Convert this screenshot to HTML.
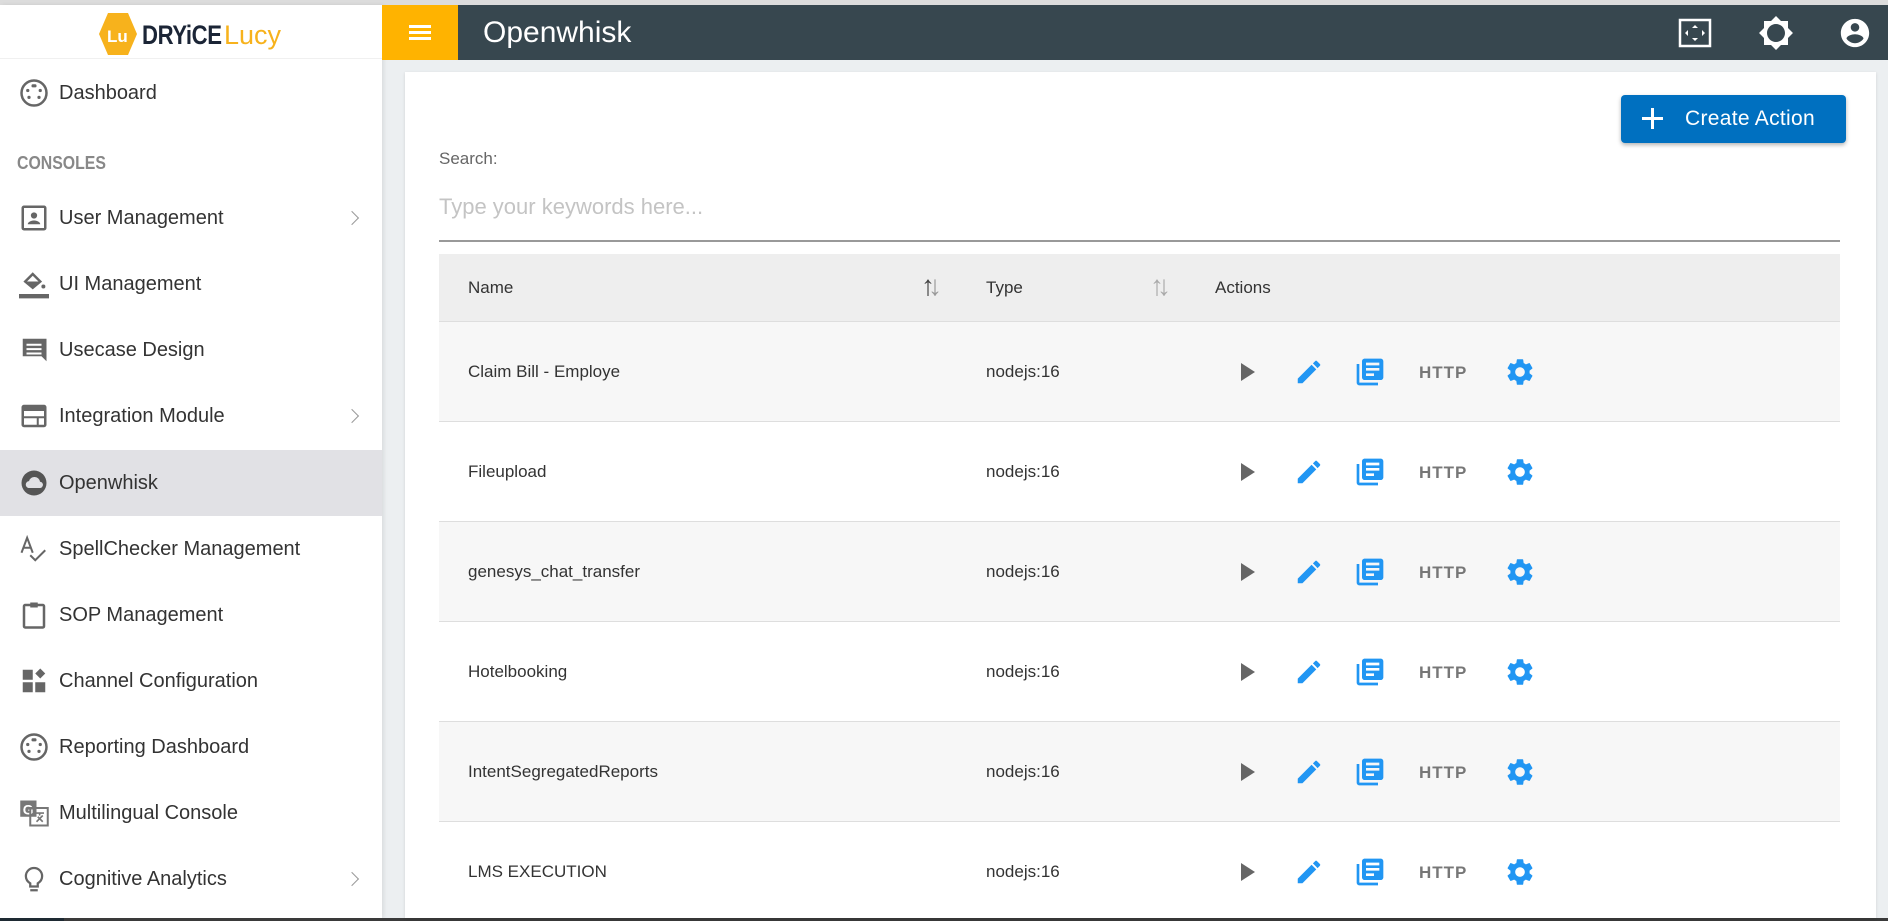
<!DOCTYPE html>
<html><head><meta charset="utf-8"><style>
*{box-sizing:border-box;margin:0;padding:0}
body{width:1888px;height:921px;overflow:hidden;background:#eceff1;font-family:"Liberation Sans",Roboto,sans-serif;position:relative}
.abs{position:absolute}
#top{left:0;top:0;width:1888px;height:5px;background:#dcdcdc}
#side{left:0;top:5px;width:382px;height:913px;background:#fff;box-shadow:2px 0 4px rgba(0,0,0,.08)}
#logo{left:0;top:5px;width:382px;height:54px;background:#fff;border-bottom:1px solid #f0f0f0}
#hdr{left:382px;top:5px;width:1506px;height:55px;background:#37474f}
#ham{left:382px;top:5px;width:76px;height:55px;background:#ffb300}
.item{position:absolute;left:0;width:382px;height:66px;font-size:20px;color:#333;display:flex;align-items:center}
.item .ic{position:absolute;left:19px;top:50%;margin-top:-15px;width:30px;height:30px}
.item span{position:absolute;left:59px}
.item .chev{position:absolute;left:347px;width:10px;height:10px;border-right:1.5px solid #999;border-top:1.5px solid #999;transform:rotate(45deg)}
#card{left:405px;top:72px;width:1471px;height:846px;background:#fff;box-shadow:0 1px 3px rgba(0,0,0,.12)}
.row{position:absolute;left:439px;width:1401px;height:100px;border-bottom:1.5px solid #dedede;font-size:17px;color:#333}
.row .n{position:absolute;left:29px;top:40px}
.row .t{position:absolute;left:547px;top:40px}
.row svg{position:absolute}
.http{position:absolute;left:980px;top:41px;font-weight:bold;font-size:17px;color:#777;letter-spacing:1px}
</style></head><body>
<div class="abs" id="top"></div>
<div class="abs" id="side"></div>
<div class="abs" id="logo">
 <svg class="abs" style="left:98px;top:7px" width="40" height="44" viewBox="0 0 40 44"><polygon points="10,1 30,1 39,22 30,43 10,43 1,22" fill="#f7b21c"/><text x="9" y="30" font-family="Liberation Sans" font-weight="bold" font-size="17" fill="#fff">Lu</text></svg>
 <div class="abs" style="left:142px;top:15px;font-size:27px;font-weight:bold;color:#1b2536;letter-spacing:-0.5px;transform:scaleX(.82);transform-origin:left">DRYiCE</div>
 <div class="abs" style="left:224px;top:15px;font-size:27px;color:#f7b21c">Lucy</div>
</div>
<div class="abs" id="hdr"></div>
<div class="abs" id="ham"><div class="abs" style="left:27px;top:20px;width:22px;height:3px;background:#fff"></div><div class="abs" style="left:27px;top:26px;width:22px;height:3px;background:#fff"></div><div class="abs" style="left:27px;top:32px;width:22px;height:3px;background:#fff"></div></div>
<div class="abs" style="left:483px;top:16px;font-size:30px;color:#fff">Openwhisk</div>
<svg class="abs" style="left:1678px;top:18px" width="34" height="30" viewBox="0 0 34 30"><rect x="2" y="2" width="30" height="26" fill="none" stroke="#fff" stroke-width="2.5"/><path d="M17 7l3 3h-6zM17 23l3-3h-6zM7 15l3-3v6zM27 15l-3-3v6z" fill="#fff"/></svg>
<svg class="abs" style="left:1758px;top:15px" width="36" height="36" viewBox="0 0 24 24"><path fill="#fff" d="M20 8.69V4h-4.69L12 .69 8.69 4H4v4.69L.69 12 4 15.31V20h4.69L12 23.31 15.31 20H20v-4.69L23.31 12 20 8.69zM12 18c-3.31 0-6-2.69-6-6s2.69-6 6-6 6 2.690 6 6-2.69 6-6 6z"/></svg>
<svg class="abs" style="left:1838px;top:16px" width="34" height="34" viewBox="0 0 24 24"><path fill="#fff" d="M12 2C6.48 2 2 6.48 2 12s4.48 10 10 10 10-4.48 10-10S17.52 2 12 2zm0 3c1.66 0 3 1.34 3 3s-1.34 3-3 3-3-1.34-3-3 1.34-3 3-3zm0 14.2c-2.5 0-4.71-1.28-6-3.22.03-1.990 4-3.08 6-3.08 1.99 0 5.970 1.09 6 3.08-1.29 1.94-3.5 3.22-6 3.22z"/></svg>

<div class="item" style="top:60px"><svg class="ic" viewBox="0 0 24 24"><circle cx="12" cy="12" r="10" fill="none" stroke="#666" stroke-width="2"/><rect x="10" y="5" width="4" height="2.5" rx="1" fill="#666"/><circle cx="7" cy="10" r="1.3" fill="#666"/><circle cx="17" cy="10" r="1.3" fill="#666"/><circle cx="8" cy="15.5" r="1.3" fill="#666"/><circle cx="16" cy="15.5" r="1.3" fill="#666"/></svg><span>Dashboard</span></div>
<div class="abs" style="left:17px;top:153px;font-size:18px;color:#888;font-weight:bold;transform:scaleX(.88);transform-origin:left">CONSOLES</div>
<div class="item" style="top:185px"><svg class="ic" viewBox="0 0 24 24"><rect x="3" y="3" width="18" height="18" rx="1" fill="none" stroke="#666" stroke-width="2"/><circle cx="12" cy="10" r="2.5" fill="#666"/><path d="M7 17c0-2 3-3 5-3s5 1 5 3z" fill="#666"/></svg><span>User Management</span><div class="chev"></div></div>
<div class="item" style="top:251px"><svg class="ic" viewBox="0 0 24 24"><path d="M5 10l6-6 6 6-6 5z" fill="none" stroke="#666" stroke-width="2"/><path d="M5 10h12l-6 5z" fill="#666"/><circle cx="19.5" cy="14" r="1.6" fill="#666"/><rect x="0" y="20" width="24" height="3.5" fill="#666"/></svg><span>UI Management</span></div>
<div class="item" style="top:317px"><svg class="ic" viewBox="0 0 24 24"><path fill="#666" d="M21 3H3v14h15l4 4V3z"/><path fill="#fff" d="M6 7h12v1.6H6zm0 3.5h12v1.6H6zm0 3.5h12v1.6H6z"/></svg><span>Usecase Design</span></div>
<div class="item" style="top:383px"><svg class="ic" viewBox="0 0 24 24"><rect x="3" y="4" width="18" height="16" rx="1" fill="none" stroke="#666" stroke-width="2"/><rect x="3" y="4" width="18" height="4" fill="#666"/><path d="M4 13h16M15 13v7" stroke="#666" stroke-width="1.6"/></svg><span>Integration Module</span><div class="chev"></div></div>
<div class="item" style="top:450px;background:#e1e1e5"><svg class="ic" viewBox="0 0 24 24"><circle cx="12" cy="12" r="10" fill="#555"/><path d="M7.5 16h9a2.5 2.5 0 0 0 .3-5A4.5 4.5 0 0 0 8 10.5 2.8 2.8 0 0 0 7.5 16z" fill="#e1e1e5"/></svg><span>Openwhisk</span></div>
<div class="item" style="top:516px"><svg class="ic" viewBox="0 0 24 24"><path d="M2 15L6.5 3 11 15M4 11h5M9 17l4 4 8-8" fill="none" stroke="#666" stroke-width="1.6"/></svg><span>SpellChecker Management</span></div>
<div class="item" style="top:582px"><svg class="ic" viewBox="0 0 24 24"><rect x="4" y="4" width="16" height="18" rx="1" fill="none" stroke="#666" stroke-width="2"/><rect x="9" y="2" width="6" height="4" fill="#666"/></svg><span>SOP Management</span></div>
<div class="item" style="top:648px"><svg class="ic" viewBox="0 0 24 24"><rect x="3" y="3" width="8" height="8" fill="#666"/><rect x="3" y="13" width="8" height="8" fill="#666"/><rect x="13" y="13" width="8" height="8" fill="#666"/><path d="M17 2l4 4-4 4-4-4z" fill="#666"/></svg><span>Channel Configuration</span></div>
<div class="item" style="top:714px"><svg class="ic" viewBox="0 0 24 24"><circle cx="12" cy="12" r="10" fill="none" stroke="#666" stroke-width="2"/><rect x="10" y="5" width="4" height="2.5" rx="1" fill="#666"/><circle cx="7" cy="10" r="1.3" fill="#666"/><circle cx="17" cy="10" r="1.3" fill="#666"/><circle cx="8" cy="15.5" r="1.3" fill="#666"/><circle cx="16" cy="15.5" r="1.3" fill="#666"/></svg><span>Reporting Dashboard</span></div>
<div class="item" style="top:780px"><svg class="ic" viewBox="0 0 24 24"><rect x="1" y="2" width="13" height="13" fill="#777"/><text x="3" y="13" font-size="11" font-weight="bold" fill="#fff" font-family="Liberation Sans">G</text><rect x="9" y="8" width="14" height="14" fill="none" stroke="#777" stroke-width="1.6"/><path d="M13 12h7M16.5 12v2M14 19l5-5M15 15l4 4" stroke="#777" stroke-width="1.3"/></svg><span>Multilingual Console</span></div>
<div class="item" style="top:846px"><svg class="ic" viewBox="0 0 24 24"><path d="M9 21h6M9 18h6v-2.5c2-1.2 3.5-3.2 3.5-5.8a6.5 6.5 0 0 0-13 0c0 2.6 1.5 4.6 3.5 5.8z" fill="none" stroke="#666" stroke-width="1.8"/></svg><span>Cognitive Analytics</span><div class="chev"></div></div>
<div class="abs" style="left:0;top:918px;width:1888px;height:3px;background:#3a3a3a"></div>
<div class="abs" style="left:0;top:918px;width:64px;height:3px;background:#1e2a33"></div>

<div class="abs" id="card"></div>
<div class="abs" style="left:1621px;top:95px;width:225px;height:48px;background:#0070c0;border-radius:4px;box-shadow:0 2px 4px rgba(0,0,0,.3);color:#fff;font-size:21px">
 <div class="abs" style="left:30px;top:13px;width:3px;height:21px;background:#fff"></div><div class="abs" style="left:21px;top:22px;width:21px;height:3px;background:#fff"></div>
 <div class="abs" style="left:64px;top:12px;letter-spacing:.3px">Create Action</div></div>
<div class="abs" style="left:439px;top:149px;font-size:17px;color:#666">Search:</div>
<div class="abs" style="left:439px;top:194px;font-size:22px;color:#c4c4c4">Type your keywords here...</div>
<div class="abs" style="left:439px;top:240px;width:1401px;height:1.5px;background:#999"></div>
<div class="abs" style="left:439px;top:254px;width:1401px;height:68px;background:#eee;border-bottom:1.5px solid #dedede;font-size:17px;color:#333">
 <div class="abs" style="left:29px;top:24px">Name</div>
 <div class="abs" style="left:482px;top:16px;font-size:28px;color:#444">↑<span style="color:#999;margin-left:-7px">↓</span></div>
 <div class="abs" style="left:547px;top:24px">Type</div>
 <div class="abs" style="left:711px;top:16px;font-size:28px;color:#aaa">↑<span style="margin-left:-7px">↓</span></div>
 <div class="abs" style="left:776px;top:24px">Actions</div>
</div>
<div id="rows"></div>
<script>
var names=["Claim Bill - Employe","Fileupload","genesys_chat_transfer","Hotelbooking","IntentSegregatedReports","LMS EXECUTION"];
var h="";
names.forEach(function(n,i){
var top=322+100*i;
h+='<div class="row" style="top:'+top+'px;background:'+(i%2==0?'#f7f7f7':'#fff')+(i==5?';border-bottom:none;height:96px':'')+'">'+
'<div class="n">'+n+'</div><div class="t">nodejs:16</div>'+
'<svg style="left:801px;top:40px" width="16" height="20" viewBox="0 0 16 20"><path d="M1 1l14 9-14 9z" fill="#666"/></svg>'+
'<svg style="left:855px;top:35px" width="30" height="30" viewBox="0 0 24 24"><path fill="#2196f3" d="M3 17.25V21h3.75L17.81 9.94l-3.75-3.75L3 17.25zM20.71 7.04a1 1 0 0 0 0-1.41l-2.34-2.34a1 1 0 0 0-1.41 0l-1.83 1.83 3.75 3.75 1.83-1.83z"/></svg>'+
'<svg style="left:915px;top:34px" width="32" height="32" viewBox="0 0 24 24"><path fill="#2196f3" d="M4 6H2v14c0 1.1.9 2 2 2h14v-2H4V6zm16-4H8c-1.1 0-2 .9-2 2v12c0 1.1.9 2 2 2h12c1.1 0 2-.9 2-2V4c0-1.1-.9-2-2-2zm-1 9H9V9h10v2zm-4 4H9v-2h6v2zm4-8H9V5h10v2z"/></svg>'+
'<div class="http">HTTP</div>'+
'<svg style="left:1065px;top:34px" width="32" height="32" viewBox="0 0 24 24"><path fill="#2196f3" d="M19.14 12.94c.04-.3.06-.61.06-.94 0-.32-.02-.64-.07-.94l2.03-1.58a.49.49 0 0 0 .12-.61l-1.92-3.32a.49.49 0 0 0-.59-.22l-2.39.96c-.5-.38-1.030-.7-1.62-.94l-.36-2.54a.48.48 0 0 0-.48-.41h-3.84c-.24 0-.43.17-.47.41l-.36 2.54c-.59.24-1.13.57-1.62.94l-2.39-.96a.49.49 0 0 0-.59.22L2.74 8.87c-.12.21-.08.47.12.61l2.03 1.58c-.05.3-.09.63-.09.94s.02.64.07.94l-2.03 1.58a.49.49 0 0 0-.12.61l1.92 3.32c.12.22.37.29.59.22l2.39-.96c.5.38 1.03.7 1.62.94l.36 2.54c.05.24.24.41.48.41h3.84c.24 0 .44-.17.47-.41l.36-2.54c.59-.24 1.13-.56 1.62-.94l2.39.96c.22.08.47 0 .59-.22l1.92-3.32c.12-.22.07-.47-.12-.61l-2.01-1.58zM12 15.6c-1.98 0-3.6-1.62-3.6-3.6s1.62-3.6 3.6-3.6 3.6 1.62 3.6 3.6-1.62 3.6-3.6 3.6z"/></svg>'+
'</div>';});
document.getElementById("rows").innerHTML=h;
</script>
</body></html>
